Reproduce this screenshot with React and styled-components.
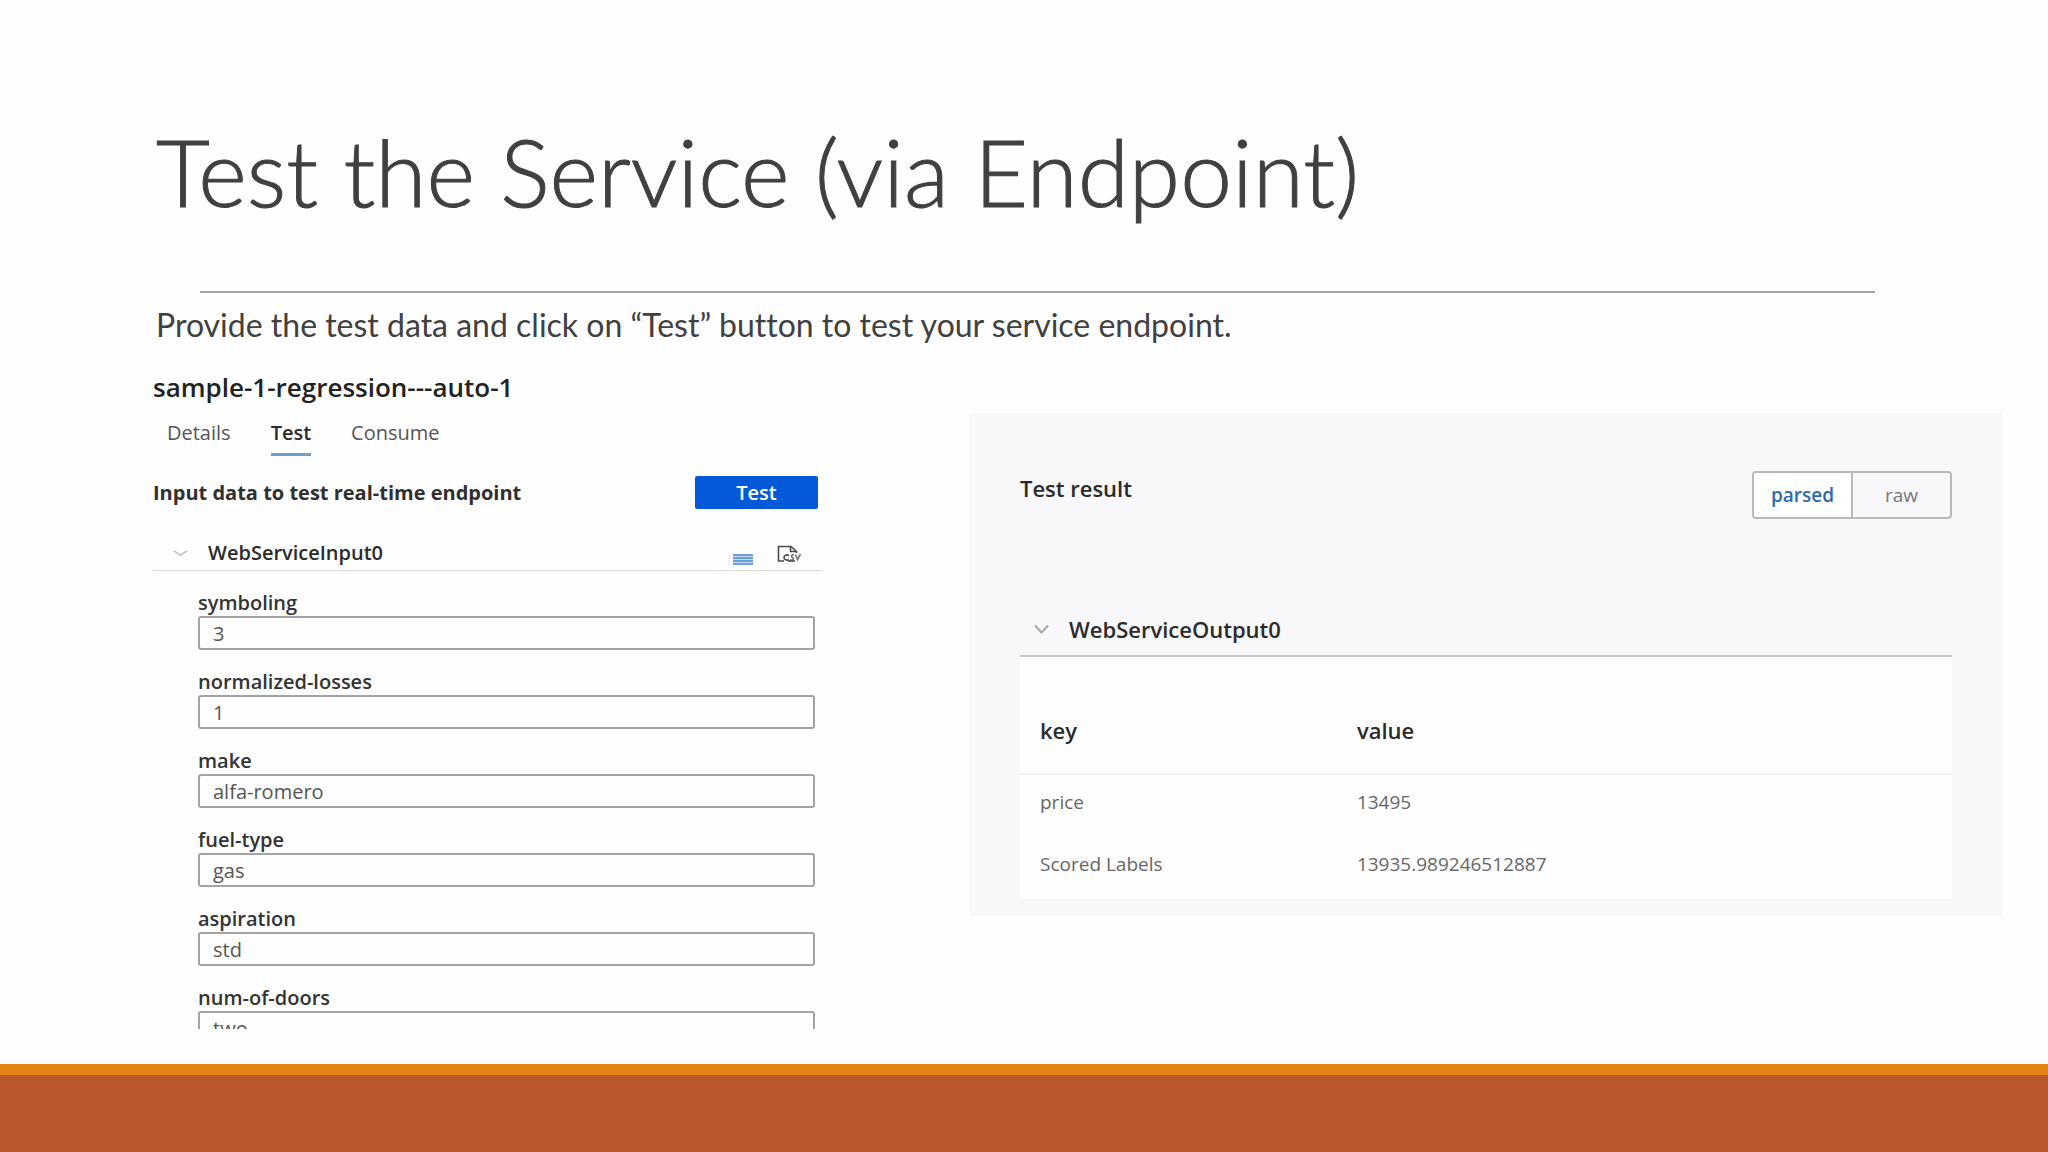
import React from 'react';
import styled, { createGlobalStyle } from 'styled-components';

const GlobalStyle = createGlobalStyle`
  * {
    box-sizing: border-box;
  }

  body {
    margin: 0;
    background: #fefefe;
    color: #404040;
    font-family: 'Open Sans', 'Noto Sans', sans-serif;
  }

  h1, h2, h3, p {
    margin: 0;
  }

  button, input {
    font-family: inherit;
  }
`;

const Slide = styled.div`
  display: flex;
  flex-direction: column;
  height: 100vh;
  overflow: hidden;
`;

const Header = styled.header`
  padding: 117px 173px 0 156px;
  font-family: Lato, sans-serif;
  font-variant-ligatures: none;
`;

const Title = styled.h1`
  font-size: 93px;
  line-height: 108px;
  font-weight: 300;
  -webkit-text-stroke: 1px #404040;
`;

const Rule = styled.hr`
  height: 2px;
  margin: 66px 0 14px 44px;
  border: 0;
  background: #a3a3a3;
`;

const Intro = styled.p`
  font-size: 32px;
  line-height: 36px;
`;

const Content = styled.main`
  flex: 1;
  min-height: 0;
  display: grid;
  grid-template-columns: 669fr 1033fr;
  grid-template-rows: minmax(0, 1fr);
  column-gap: 147px;
  padding: 26px 46px 35px 153px;
`;

const InputPanel = styled.section`
  overflow: hidden;
`;

const EndpointName = styled.h2`
  color: #222;
  font-size: 26px;
  line-height: 36px;
  font-weight: 600;
`;

const Tabs = styled.nav`
  display: flex;
  gap: 40px;
  margin-top: 16px;
  padding-left: 14px;
`;

const Tab = styled.button`
  padding: 0 0 8px;
  border: 0;
  border-bottom: 3px solid ${(props) => (props.$active ? '#6f9fc8' : 'transparent')};
  background: none;
  color: ${(props) => (props.$active ? '#2b2b2b' : '#555')};
  font-size: 20px;
  line-height: 24px;
  font-weight: ${(props) => (props.$active ? 600 : 400)};
  cursor: pointer;
`;

const ActionRow = styled.div`
  display: flex;
  justify-content: space-between;
  align-items: center;
  margin-top: 20px;
  padding-right: 4px;
`;

const ActionTitle = styled.h3`
  color: #2f2f2f;
  font-size: 20px;
  line-height: 24px;
  font-weight: 700;
`;

const TestButton = styled.button`
  width: 123px;
  height: 33px;
  border: 0;
  border-radius: 2px;
  background: #0359d8;
  color: #fff;
  font-size: 20px;
  line-height: 24px;
  font-weight: 600;
  cursor: pointer;
`;

const InputHead = styled.div`
  display: flex;
  align-items: center;
  margin-top: 32px;
  padding: 0 20px 5px;
  border-bottom: 1px solid #d9d9d9;
`;

const InputTitle = styled.h3`
  flex: 1;
  margin-left: 20px;
  color: #2b2b2b;
  font-size: 20px;
  line-height: 24px;
  font-weight: 600;
`;

const Tools = styled.div`
  display: flex;
  align-items: center;
  gap: 24px;
`;

const IconButton = styled.button`
  display: flex;
  padding: 0;
  border: 0;
  background: none;
  cursor: pointer;
`;

const Fields = styled.form`
  display: flex;
  flex-direction: column;
  gap: 20px;
  padding: 20px 7px 0 45px;
`;

const Field = styled.div`
  display: flex;
  flex-direction: column;
  gap: 1px;
`;

const Label = styled.label`
  color: #333;
  font-size: 20px;
  line-height: 24px;
  font-weight: 600;
`;

const TextInput = styled.input`
  width: 100%;
  height: 34px;
  padding: 0 13px;
  border: 2px solid #a3a3a3;
  border-radius: 3px;
  background: #fefefe;
  color: #555;
  font-size: 20px;
  outline: none;
`;

const ResultPanel = styled.section`
  align-self: start;
  margin-top: 44px;
  padding: 58px 50px 17px 51px;
  background: #f8f7f9;
`;

const ResultHead = styled.div`
  display: flex;
  justify-content: space-between;
  align-items: flex-start;
`;

const ResultTitle = styled.h2`
  color: #2b2b2b;
  font-size: 22px;
  line-height: 34px;
  font-weight: 600;
`;

const Toggle = styled.div`
  display: flex;
  height: 48px;
  border: 2px solid #b9b8ba;
  border-radius: 4px;
  overflow: hidden;
`;

const ToggleButton = styled.button`
  width: 97px;
  padding: 0;
  border: 0;
  background: ${(props) => (props.$active ? '#fff' : 'transparent')};
  color: ${(props) => (props.$active ? '#2a6ca8' : '#777')};
  font-size: 19px;
  font-weight: ${(props) => (props.$active ? 600 : 400)};
  cursor: pointer;

  & + & {
    width: 99px;
    border-left: 2px solid #b9b8ba;
  }
`;

const OutputHead = styled.div`
  display: flex;
  align-items: center;
  gap: 20px;
  margin-top: 93px;
  padding: 0 14px 9px;
  border-bottom: 2px solid #cbc9cc;
`;

const ResultTable = styled.table`
  width: 100%;
  border-collapse: collapse;
  background: #fefefe;
  text-align: left;
`;

const HeadCell = styled.th`
  width: ${(props) => props.$width};
  padding: 56px 0 26px 20px;
  border-bottom: 2px solid #f3f1f4;
  color: #2b2b2b;
  font-size: 22px;
  line-height: 34px;
  font-weight: 600;
`;

const Cell = styled.td`
  padding: 11px 0 19px 20px;
  color: #666;
  font-size: 19px;
  line-height: 32px;
`;

const Footer = styled.footer`
  flex: none;
  height: 88px;
  border-top: 11px solid #e48312;
  background: #bd582c;
`;

const fields = [
  { name: 'symboling', value: '3' },
  { name: 'normalized-losses', value: '1' },
  { name: 'make', value: 'alfa-romero' },
  { name: 'fuel-type', value: 'gas' },
  { name: 'aspiration', value: 'std' },
  { name: 'num-of-doors', value: 'two' },
];

const results = [
  { key: 'price', value: '13495' },
  { key: 'Scored Labels', value: '13935.989246512887' },
];

const Chevron = ({ height, color }) => (
  <svg width="15" height={height} viewBox="0 0 15 10" preserveAspectRatio="none" fill="none" stroke={color} strokeWidth="2">
    <path d="M1 1.5 7.5 8.5 14 1.5" />
  </svg>
);

const ListIcon = () => (
  <svg width="26" height="24" viewBox="0 0 26 24">
    <path d="M6 14h20M6 17h20M6 20h20M6 23h20" stroke="#6c9fdc" strokeWidth="2" />
    <path d="M6 15.500h20M6 18.500h20M6 21.500h20" stroke="#c3d9f2" strokeWidth="1" />
    <path d="M1 14h3M1 17h3M1 20h3M1 23h3" stroke="#d9e3ee" strokeWidth="1" />
  </svg>
);

const CsvIcon = () => (
  <svg width="25" height="24" viewBox="0 -4 25 24" fill="none" stroke="#4a4a4a" strokeWidth="1.6">
    <path d="M7 16H1.5V1.5H14L19.5 6.5V8" />
    <path d="M13.5 1.5V6.5H19.5" />
    <path d="M12 10.5C9.500 9 7 10.500 7 12.500S9.500 16 12 14.500" />
    <path d="M17 10C14.500 9.500 13.500 11.500 15.500 12.500S16 15.500 13 15M18.500 9.500L20.500 14.500L23.500 9" stroke="#777" />
    <path d="M11 16H18" />
  </svg>
);

const App = () => {
  return (
    <>
      <GlobalStyle />
      <Slide>
        <Header>
          <Title>Test the Service (via Endpoint)</Title>
          <Rule />
          <Intro>Provide the test data and click on “Test” button to test your service endpoint.</Intro>
        </Header>
        <Content>
          <InputPanel>
            <EndpointName>sample-1-regression---auto-1</EndpointName>
            <Tabs>
              <Tab type="button">Details</Tab>
              <Tab type="button" $active>Test</Tab>
              <Tab type="button">Consume</Tab>
            </Tabs>
            <ActionRow>
              <ActionTitle>Input data to test real-time endpoint</ActionTitle>
              <TestButton type="button">Test</TestButton>
            </ActionRow>
            <InputHead>
              <Chevron height="6" color="#bbb" />
              <InputTitle>WebServiceInput0</InputTitle>
              <Tools>
                <IconButton type="button" aria-label="Form view">
                  <ListIcon />
                </IconButton>
                <IconButton type="button" aria-label="Upload CSV">
                  <CsvIcon />
                </IconButton>
              </Tools>
            </InputHead>
            <Fields>
              {fields.map((field) => (
                <Field key={field.name}>
                  <Label htmlFor={field.name}>{field.name}</Label>
                  <TextInput id={field.name} type="text" defaultValue={field.value} />
                </Field>
              ))}
            </Fields>
          </InputPanel>
          <ResultPanel>
            <ResultHead>
              <ResultTitle>Test result</ResultTitle>
              <Toggle>
                <ToggleButton type="button" $active>parsed</ToggleButton>
                <ToggleButton type="button">raw</ToggleButton>
              </Toggle>
            </ResultHead>
            <OutputHead>
              <Chevron height="10" color="#aaa" />
              <ResultTitle>WebServiceOutput0</ResultTitle>
            </OutputHead>
            <ResultTable>
              <thead>
                <tr>
                  <HeadCell $width="34%">key</HeadCell>
                  <HeadCell>value</HeadCell>
                </tr>
              </thead>
              <tbody>
                {results.map((row) => (
                  <tr key={row.key}>
                    <Cell>{row.key}</Cell>
                    <Cell>{row.value}</Cell>
                  </tr>
                ))}
              </tbody>
            </ResultTable>
          </ResultPanel>
        </Content>
        <Footer />
      </Slide>
    </>
  );
};

export default App;
